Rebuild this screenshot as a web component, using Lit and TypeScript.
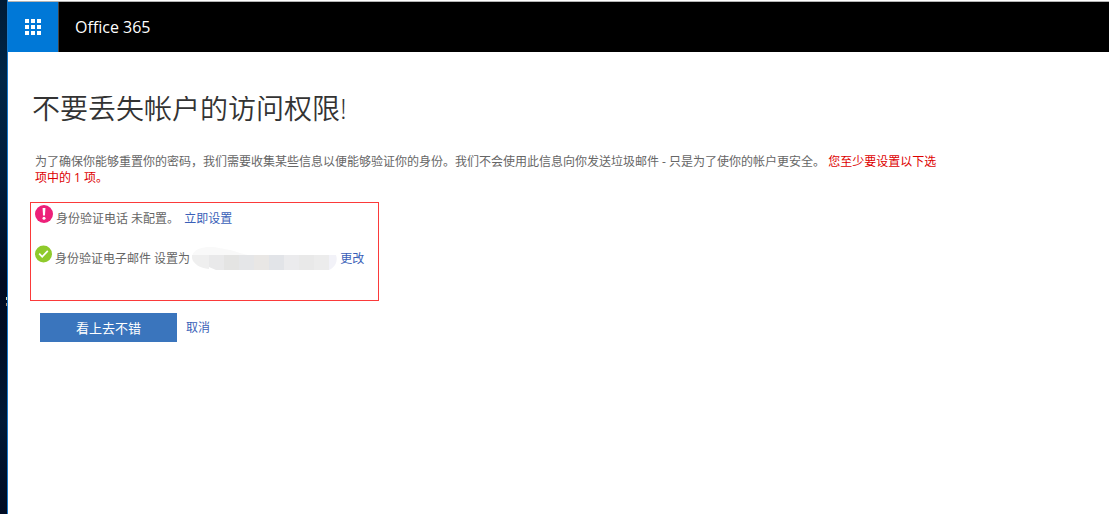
import { LitElement, html, css } from "lit";
import { customElement } from "lit/decorators.js";

@customElement("app-root")
export class AppRoot extends LitElement {
  static styles = css`
    :host {
      display: flex;
      min-height: 100vh;
      background: #fff;
      color: #666;
      font: 12px/16px "Open Sans", "Noto Sans CJK SC", sans-serif;
    }
    .desktop {
      box-sizing: border-box;
      flex: none;
      width: 8px;
      border-right: 1px solid #1979ca;
      background: linear-gradient(#001b36, #002647 15%, #001c3b 35%, #000b22 55%, #000d24 65%, #001936 82%, #000b22);
      position: relative;
    }
    .speck {
      position: absolute;
      right: 0;
      top: 297px;
      width: 1px;
      height: 3px;
      background: #d9e6c8;
      box-shadow: 0 6px 0 #a89080;
    }
    .window {
      flex: 1;
      min-width: 0;
      padding-top: 1px;
    }
    header {
      display: flex;
      align-items: stretch;
      height: 50px;
      border-top: 1px solid #b4b4b4;
      background: #000;
      color: #fff;
    }
    .launcher {
      width: 51px;
      padding: 0;
      border: 0;
      border-right: 1px solid #444;
      background: #0078d7;
      display: grid;
      place-items: center;
    }
    .brand {
      margin: 0 16px;
      font-size: 16px;
      line-height: 50px;
      color: #fff;
      text-decoration: none;
    }
    main {
      padding: 44px 24px 24px;
    }
    h1 {
      margin: 0;
      color: #333;
      font-size: 28px;
      line-height: 24px;
      font-weight: 350;
      overflow-x: visible;
      overflow-y: clip;
      padding-bottom: 4px;
    }
    .intro {
      margin: 30px 0 0 3px;
      max-width: 912px;
    }
    .required {
      color: #d00;
    }
    a {
      color: #3a5fb8;
      text-decoration: none;
    }
    .methods {
      box-sizing: border-box;
      list-style: none;
      margin: 16px 0 0 -2px;
      padding: 2px 4px;
      width: 349px;
      max-width: 100%;
      min-height: 99px;
      border: 1px solid #fb3a3a;
      display: flex;
      flex-direction: column;
      gap: 18px;
    }
    .methods li {
      display: flex;
      align-items: flex-end;
      gap: 3px;
      height: 22px;
    }
    .methods svg {
      flex: none;
      align-self: flex-start;
    }
    .methods a {
      margin-left: 2px;
    }
    .methods .masked {
      margin: 0 -5px -3px -3px;
      align-self: flex-end;
    }
    .actions {
      display: flex;
      align-items: center;
      gap: 9px;
      margin: 12px 0 0 8px;
    }
    .confirm {
      width: 137px;
      height: 29px;
      padding: 0;
      border: 0;
      background: #3a75bd;
      color: #fff;
      font: inherit;
      font-size: 13px;
    }
  `;

  render() {
    const dots = [0, 6, 12];
    return html`
      <div class="desktop"><span class="speck"></span></div>
      <div class="window">
        <header>
          <button class="launcher" aria-label="应用启动器">
            <svg width="16" height="16" viewBox="0 0 16 16" fill="#fff">
              <path d=${dots.map((y) => dots.map((x) => `M${x} ${y}h4v4h-4z`).join("")).join("")} />
            </svg>
          </button>
          <a class="brand" href="#">Office 365</a>
        </header>
        <main>
          <h1>不要丢失帐户的访问权限!</h1>
          <p class="intro">
            为了确保你能够重置你的密码，我们需要收集某些信息以便能够验证你的身份。我们不会使用此信息向你发送垃圾邮件 - 只是为了使你的帐户更安全。
            <span class="required">您至少要设置以下选项中的 1 项。</span>
          </p>
          <ul class="methods">
            <li>
              <svg width="18" height="18" viewBox="0 0 18 18">
                <circle cx="9" cy="9" r="9" fill="#ed2079" />
                <path d="M7.6 3h2.8l-.4 7.4H8z" fill="#fff" />
                <circle cx="9" cy="13.2" r="1.5" fill="#fff" />
              </svg>
              <span>身份验证电话 未配置。</span>
              <a href="#">立即设置</a>
            </li>
            <li>
              <svg width="17" height="18" viewBox="0 0 17 18">
                <circle cx="8.5" cy="9" r="8.5" fill="#8fca2c" />
                <path d="M4.2 8.6l3 3.2 5.6-6" fill="none" stroke="#fff" stroke-width="1.7" />
              </svg>
              <span>身份验证电子邮件 设置为</span>
              <svg class="masked" width="150" height="24" viewBox="0 0 150 24">
                <path d="M2 10C4 3 12 1 20 1c8 0 12 2 20 3 8 2 12 4 18 5H2z" fill="#f9f9f9" />
                <path d="M2 9h17v14C10 22 3 18 2 12z" fill="#efefef" />
                <path d="M19 9h15v15H26l-7-3z" fill="#e9e9ea" />
                <path d="M34 9h15v15H34z" fill="#e4e4e3" />
                <path d="M49 9h15v15H49z" fill="#e5e6e8" />
                <path d="M64 9h15v15H64z" fill="#e9e7e5" />
                <path d="M79 9h15v15H79z" fill="#e2e4e8" />
                <path d="M94 9h15v15H94z" fill="#ebebed" />
                <path d="M109 9h15v15h-15z" fill="#e9e9e9" />
                <path d="M124 9h15v15h-15z" fill="#ececec" />
                <path d="M139 9h7c2 5 0 12-7 15z" fill="#f2f2f8" />
              </svg>
              <a href="#">更改</a>
            </li>
          </ul>
          <div class="actions">
            <button class="confirm">看上去不错</button>
            <a href="#">取消</a>
          </div>
        </main>
      </div>
    `;
  }
}
